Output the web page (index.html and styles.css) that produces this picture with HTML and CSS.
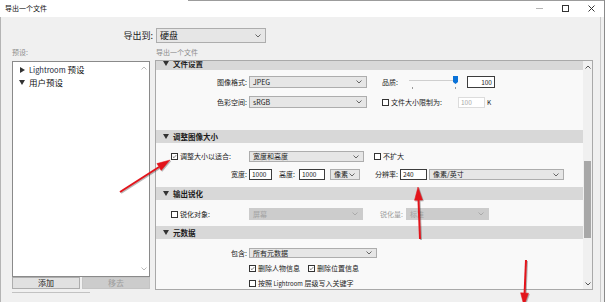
FILE: index.html
```html
<!DOCTYPE html>
<html lang="zh">
<head>
<meta charset="utf-8">
<title>导出一个文件</title>
<link rel="stylesheet" href="styles.css">
</head>
<body>
<div class="window">
  <div class="titlebar">
    <span class="title">导出一个文件</span>
    <div class="controls">
      <span class="ctl"><svg width="7" height="1" viewBox="0 0 7 1"><path d="M0 .5h7" stroke="#b5b5b5"/></svg></span>
      <span class="ctl"><svg width="7" height="7" viewBox="0 0 7 7"><rect x=".5" y=".5" width="6" height="6" fill="none" stroke="#333"/></svg></span>
      <span class="ctl"><svg width="7" height="7" viewBox="0 0 7 7"><path d="M.5.5l6 6M6.5.5l-6 6" stroke="#333"/></svg></span>
    </div>
  </div>
  <div class="main">
    <div class="content">
      <div class="export-row">
        <span class="export-label">导出到:</span>
        <div class="select big">硬盘<svg class="chev" viewBox="0 0 6 4"><path d="M.5.5 3 3 5.5.5" fill="none" stroke="#666"/></svg></div>
      </div>
      <div class="columns">
        <div class="left">
          <div class="caption">预设:</div>
          <div class="tree">
            <div class="tree-list">
              <div class="tree-item"><span class="tri-right"></span><span class="lr">Lightroom</span>&nbsp;预设</div>
              <div class="tree-item"><span class="tri-down"></span>用户预设</div>
            </div>
            <div class="tree-scroll">
              <svg class="sarrow" viewBox="0 0 6 4"><path d="M.5 3.5 3 1l2.5 2.5" fill="none" stroke="#bbb"/></svg>
              <svg class="sarrow" viewBox="0 0 6 4"><path d="M.5.5 3 3l2.5-2.5" fill="none" stroke="#bbb"/></svg>
            </div>
          </div>
          <div class="btns">
            <div class="btn">添加</div>
            <div class="btn disabled">移去</div>
          </div>
          <div class="stub"></div>
        </div>
        <div class="right">
          <div class="caption">导出一个文件</div>
          <div class="panel">
            <div class="scroll">
              <div class="sec-head first"><span class="tri-down"></span>文件设置</div>
              <div class="sec c1">
                <div class="row">
                  <span class="lbl w91">图像格式:</span>
                  <div class="select s118">JPEG<svg class="chev" viewBox="0 0 6 4"><path d="M.5.5 3 3 5.5.5" fill="none" stroke="#666"/></svg></div>
                  <span class="lbl ml15">品质:</span>
                  <div class="slider">
                    <span class="track"></span>
                    <span class="tick t1"></span><span class="tick t2"></span>
                    <svg class="thumb" viewBox="0 0 5 8"><path d="M0 0h5v6L2.5 8 0 6z" fill="#0a72d8"/></svg>
                  </div>
                  <div class="input dark w28 right-al">100</div>
                </div>
                <div class="row">
                  <span class="lbl w91">色彩空间:</span>
                  <div class="select s118">sRGB<svg class="chev" viewBox="0 0 6 4"><path d="M.5.5 3 3 5.5.5" fill="none" stroke="#666"/></svg></div>
                  <span class="cb ml15"></span><span class="lbl">文件大小限制为:</span>
                  <div class="input off w27">100</div>
                  <span class="lbl k">K</span>
                </div>
              </div>
              <div class="sec-head"><span class="tri-down"></span>调整图像大小</div>
              <div class="sec c2">
                <div class="row">
                  <div class="cbgroup"><span class="cb on"><svg viewBox="0 0 7 7"><path d="M1.2 3.6 2.8 5.2 5.9 1.6" fill="none" stroke="#333" stroke-width=".9"/></svg></span><span class="lbl">调整大小以适合:</span></div>
                  <div class="select s115">宽度和高度<svg class="chev" viewBox="0 0 6 4"><path d="M.5.5 3 3 5.5.5" fill="none" stroke="#666"/></svg></div>
                  <span class="cb ml10"></span><span class="lbl">不扩大</span>
                </div>
                <div class="row">
                  <span class="lbl w91">宽度:</span>
                  <div class="input dark w23">1000</div>
                  <span class="lbl ml7">高度:</span>
                  <div class="input dark w26 ml4">1000</div>
                  <div class="select s30 ml5">像素<svg class="chev" viewBox="0 0 6 4"><path d="M.5.5 3 3 5.5.5" fill="none" stroke="#666"/></svg></div>
                  <span class="lbl ml15">分辨率:</span>
                  <div class="input dark w27">240</div>
                  <div class="select s135">像素/英寸<svg class="chev" viewBox="0 0 6 4"><path d="M.5.5 3 3 5.5.5" fill="none" stroke="#666"/></svg></div>
                </div>
              </div>
              <div class="sec-head"><span class="tri-down"></span>输出锐化</div>
              <div class="sec c3">
                <div class="row">
                  <div class="cbgroup"><span class="cb"></span><span class="lbl">锐化对象:</span></div>
                  <div class="select s114 off">屏幕<svg class="chev" viewBox="0 0 6 4"><path d="M.5.5 3 3 5.5.5" fill="none" stroke="#aaa"/></svg></div>
                  <span class="lbl grey ml17">锐化量:</span>
                  <div class="select s83 off">标准<svg class="chev" viewBox="0 0 6 4"><path d="M.5.5 3 3 5.5.5" fill="none" stroke="#aaa"/></svg></div>
                </div>
              </div>
              <div class="sec-head"><span class="tri-down"></span>元数据</div>
              <div class="sec c4">
                <div class="row">
                  <span class="lbl w91">包含:</span>
                  <div class="select s128">所有元数据<svg class="chev" viewBox="0 0 6 4"><path d="M.5.5 3 3 5.5.5" fill="none" stroke="#666"/></svg></div>
                </div>
                <div class="row indent">
                  <span class="cb on"><svg viewBox="0 0 7 7"><path d="M1.2 3.6 2.8 5.2 5.9 1.6" fill="none" stroke="#333" stroke-width=".9"/></svg></span><span class="lbl">删除人物信息</span>
                  <span class="cb on ml8"><svg viewBox="0 0 7 7"><path d="M1.2 3.6 2.8 5.2 5.9 1.6" fill="none" stroke="#333" stroke-width=".9"/></svg></span><span class="lbl">删除位置信息</span>
                </div>
                <div class="row indent">
                  <span class="cb"></span><span class="lbl">按照 <span class="lr-small">Lightroom</span> 层级写入关键字</span>
                </div>
              </div>
            </div>
            <div class="vscroll">
              <svg class="sarrow" viewBox="0 0 6 4"><path d="M.5 3.5 3 1l2.5 2.5" fill="none" stroke="#555"/></svg>
              <div class="vtrack"><div class="vthumb"></div></div>
              <svg class="sarrow" viewBox="0 0 6 4"><path d="M.5.5 3 3l2.5-2.5" fill="none" stroke="#555"/></svg>
            </div>
          </div>
        </div>
      </div>
    </div>
  </div>
  <svg class="arrows" width="605" height="302" viewBox="0 0 605 302">
    <g fill="#e3141b" stroke="#e3141b">
      <path d="M120 192 159 167" stroke-width="2" fill="none"/>
      <path d="M170 160 161.2 170.4 156.9 163.6z" stroke-width=".5"/>
      <path d="M420 239 418.5 200" stroke-width="2" fill="none"/>
      <path d="M418 187 422.5 200 414.5 200.3z" stroke-width=".5"/>
      <path d="M526 260 524.6 293" stroke-width="2" fill="none"/>
      <path d="M524 306 528.5 293.2 520.6 292.8z" stroke-width=".5"/>
    </g>
  </svg>
</div>
</body>
</html>
```
FILE: styles.css
```css
* { box-sizing: border-box; margin: 0; padding: 0; }
html, body { width: 605px; height: 302px; overflow: hidden; }
body {
  font-family: "Noto Sans CJK SC", "Noto Sans", sans-serif;
  font-size: 7px;
  line-height: 1;
  color: #1b1b1b;
  background: #f0f0f0;
}
.window {
  position: relative;
  width: 605px;
  height: 302px;
  display: flex;
  flex-direction: column;
  border-right: 1px solid #8a8a8a;
}
.titlebar {
  height: 17px;
  flex: none;
  display: flex;
  align-items: center;
  justify-content: space-between;
  padding-left: 5px;
  background: linear-gradient(to right, #fff 188px, #9c9c9c 188px) top left / 100% 1px no-repeat, #fff;
}
.title { font-size: 7px; color: #111; }
.controls { display: flex; height: 100%; }
.ctl { width: 26px; height: 17px; display: flex; align-items: center; justify-content: center; }
.ctl svg { display: block; }

.main {
  flex: 1;
  display: flex;
  background: #f0f0f0;
  border-left: 1px solid #b4b4b4;
}
.content {
  width: 600px;
  height: 100%;
  border-right: 1px solid #c9c9c9;
  padding-left: 11px;
}
.export-row {
  display: flex;
  align-items: center;
  height: 15px;
  margin-top: 11px;
}
.export-label {
  width: 141px;
  text-align: right;
  font-size: 9px;
  color: #222;
}
.select {
  display: flex;
  align-items: center;
  height: 12px;
  padding: 0 4px 0 3px;
  background: #e6e6e6;
  border: 1px solid #adadad;
  font-size: 7px;
  color: #222;
  white-space: nowrap;
}
.select.big {
  width: 110px;
  height: 15px;
  margin-left: 3px;
  font-size: 9px;
  color: #111;
}
.chev { width: 6px; height: 4px; margin-left: auto; flex: none; }

.columns { display: flex; gap: 5px; }
.left { width: 138px; display: flex; flex-direction: column; }
.right { width: 438px; display: flex; flex-direction: column; }
.caption {
  height: 17px;
  padding-top: 6px;
  color: #8d8d8d;
  font-size: 7px;
}
.right .caption { padding-left: 1px; }

.tree {
  margin-top: 1px;
  height: 216px;
  background: #fff;
  border: 1px solid #8a8a8a;
  display: flex;
}
.tree-list { flex: 1; padding: 1px 0 0 6px; }
.tree-item {
  height: 13px;
  display: flex;
  align-items: center;
  font-size: 8.5px;
  color: #111;
}
.tree-item .lr { font-size: 7.5px; color: #1a1f3a; }
.tri-right {
  width: 0; height: 0;
  border-left: 5px solid #333;
  border-top: 3px solid transparent;
  border-bottom: 3px solid transparent;
  margin: 0 4px 0 1px;
}
.tri-down {
  width: 0; height: 0;
  border-top: 5px solid #333;
  border-left: 3px solid transparent;
  border-right: 3px solid transparent;
  margin: 0 4px 0 0;
}
.tree-scroll {
  width: 10px;
  display: flex;
  flex-direction: column;
  justify-content: space-between;
  align-items: center;
  padding: 4px 0 5px;
}
.sarrow { width: 6px; height: 4px; display: block; }

.btns { display: flex; gap: 2px; margin-top: 0; }
.btn {
  width: 68px;
  height: 12px;
  display: flex;
  align-items: center;
  justify-content: center;
  background: #e1e1e1;
  border: 1px solid #adadad;
  font-size: 8px;
  color: #222;
}
.btn.disabled { background: #cccccc; border-color: #c4c4c4; color: #9d9d9d; }
.stub { width: 78px; margin-top: 3px; border-top: 1px solid #c2c2c2; }

.panel {
  height: 230px;
  border: 1px solid #a9a9a9;
  display: flex;
  background: #f7f7f7;
}
.scroll { flex: 1; overflow: hidden; display: flex; flex-direction: column; }
.sec-head {
  height: 13px;
  flex: none;
  display: flex;
  align-items: center;
  padding-left: 7px;
  background: #d8d8d8;
  font-size: 7.5px;
  font-weight: bold;
  color: #1b1b1b;
}
.sec-head.first { margin-top: -4px; }
.sec { flex: none; background: #f9f9f9; display: flex; flex-direction: column; }
.c1 { height: 60px; padding-top: 6px; gap: 8px; }
.c2 { height: 44px; padding-top: 8px; gap: 7px; }
.c3 { height: 26px; padding-top: 8px; }
.c4 { height: 60px; padding-top: 9px; gap: 4px; }
.c1 .row { height: 12px; }
.c2 .row { height: 11px; }
.c2 .select, .c2 .input { height: 11px; }
.c3 .row { height: 12px; }
.c4 .row { height: 10px; }
.c4 .select { height: 10px; }
.c4 .row + .row { margin-top: 1px; }
.row { display: flex; align-items: center; }
.row.indent { padding-left: 93px; }
.lbl { white-space: nowrap; color: #222; }
.lbl.grey { color: #9d9d9d; }
.w91 { width: 91px; text-align: right; margin-right: 2px; }
.ml4 { margin-left: 4px; }
.ml5 { margin-left: 5px; }
.ml7 { margin-left: 7px; }
.ml8 { margin-left: 8px; }
.ml10 { margin-left: 10px; }
.ml15 { margin-left: 15px; }
.ml17 { margin-left: 17px; }
.s118 { width: 118px; }
.s115 { width: 115px; margin-left: 2px; }
.s114 { width: 114px; margin-left: 2px; }
.s83 { width: 83px; margin-left: 3px; }
.s30 { width: 30px; }
.s135 { width: 135px; margin-left: 2px; }
.s128 { width: 128px; }
.select.off { background: #cccccc; border-color: #cccccc; color: #a3a3a3; }

.input {
  height: 12px;
  display: flex;
  align-items: center;
  padding: 0 2px;
  background: #fff;
  font-size: 6.5px;
  color: #222;
}
.input.dark { border: 1px solid #3c3c3c; }
.input.off { border: 1px solid #dcdcdc; color: #a8a8a8; height: 11px; margin-left: 16px; }
.right-al { justify-content: flex-end; }
.w23 { width: 23px; }
.w26 { width: 26px; }
.w27 { width: 27px; margin-left: 2px; }
.w28 { width: 28px; margin-left: 10px; }
.input.off.w27 { margin-left: 16px; }
.k { margin-left: 2px; font-size: 6.5px; }

.slider { position: relative; width: 48px; height: 12px; margin-left: 11px; }
.track { position: absolute; left: 0; right: 0; top: 4px; height: 1px; background: #cfcfcf; }
.tick { position: absolute; top: 11px; width: 1px; height: 2px; background: #9a9a9a; }
.t1 { left: 3px; }
.t2 { left: 46px; }
.thumb { position: absolute; left: 44px; top: 0; width: 5px; height: 8px; }

.cb {
  width: 7px;
  height: 7px;
  flex: none;
  border: 1px solid #333;
  background: #fff;
  margin-right: 2px;
  display: flex;
}
.cb svg { width: 5px; height: 5px; margin: 0; display: block; }
.cbgroup { width: 91px; padding-left: 15px; display: flex; align-items: center; }
.lr-small { font-size: 6px; }

.vscroll {
  width: 9px;
  display: flex;
  flex-direction: column;
  align-items: center;
  background: #f0f0f0;
  padding: 4px 0 3px;
}
.vtrack { flex: 1; width: 100%; display: flex; flex-direction: column; }
.vthumb { margin: 92px 1px 0; height: 77px; background: #a8a8a8; }

.arrows {
  position: absolute;
  left: 0;
  top: 0;
  pointer-events: none;
  filter: drop-shadow(1px 1px 0.6px rgba(0,0,0,0.28));
}
```
